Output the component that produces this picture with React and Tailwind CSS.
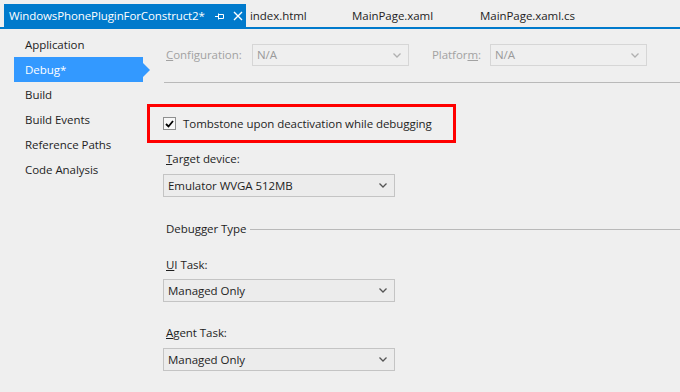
import React from 'react'

const NAV = ['Application', 'Debug*', 'Build', 'Build Events', 'Reference Paths', 'Code Analysis']

export default function App() {
  return (
    <div
      className="flex h-[392px] w-[680px] flex-col overflow-hidden bg-[#efefef] text-[11.5px] tracking-[-0.05px] text-[#1e1e1e]"
      style={{ fontFamily: '"Open Sans", "Noto Sans", sans-serif' }}
    >
      {/* Document tabs */}
      <div className="flex h-[29px] shrink-0 items-end border-b-2 border-[#007acc]">
        <div className="ml-[4px] flex h-[23px] w-[242px] items-center bg-[#007acc] pl-[5px] text-white">
          <span className="w-[206px] whitespace-nowrap tracking-[-0.1px]">
            WindowsPhonePluginForConstruct2*
          </span>
          <PinIcon />
          <CloseIcon />
        </div>
        <div className="flex h-[23px] w-[106px] items-center pl-[4px]">index.html</div>
        <div className="flex h-[23px] w-[128px] items-center">MainPage.xaml</div>
        <div className="flex h-[23px] items-center">MainPage.xaml.cs</div>
      </div>

      <div className="flex flex-1">
        {/* Left nav */}
        <div className="flex w-[150px] shrink-0 flex-col pt-[3px]">
          {NAV.map((item) =>
            item === 'Debug*' ? (
              <div key={item} className="flex h-[25px] items-center">
                <div className="ml-[14px] flex h-[25px] w-[129px] items-center bg-[#3399ff] pl-[11px] text-white">
                  {item}
                </div>
                <svg width="7" height="14" viewBox="0 0 7 14">
                  <path d="M0 0L7 7L0 14Z" fill="#3399ff" />
                </svg>
              </div>
            ) : (
              <div key={item} className="flex h-[25px] items-center pl-[25px]">
                {item}
              </div>
            )
          )}
        </div>

        {/* Debug page */}
        <div className="flex flex-1 flex-col pt-[15px]">
          <div className="flex h-[22px] items-center">
            <span className="ml-[16px] w-[86px] text-[#a2a2a2]">
              <u>C</u>onfiguration:
            </span>
            <Combo value="N/A" disabled className="h-[22px] w-[157px]" />
            <span className="ml-[23px] w-[58px] text-[#a2a2a2]">
              Platfor<u>m</u>:
            </span>
            <Combo value="N/A" disabled className="h-[22px] w-[157px]" />
          </div>

          <div className="ml-[14px] mt-[16px] h-px bg-[#b9b9b9]" />

          <div className="ml-[-3px] mt-[21px] flex h-[39px] w-[309px] items-center border-[3px] border-[#ff0000] pl-[13px]">
            <Checkbox />
            <span className="ml-[7px] whitespace-nowrap">Tombstone upon deactivation while debugging</span>
          </div>

          <Label className="mt-[8px]">
            <u>T</u>arget device:
          </Label>
          <Combo value="Emulator WVGA 512MB" className="ml-[13px] mt-[7px] h-[23px] w-[232px]" />

          <div className="mt-[24px] flex h-[16px] items-center">
            <span className="ml-[16px] whitespace-nowrap">Debugger Type</span>
            <div className="ml-[4px] h-px flex-1 bg-[#b9b9b9]" />
          </div>

          <Label className="mt-[20px]">
            <u>U</u>I Task:
          </Label>
          <Combo value="Managed Only" className="ml-[13px] mt-[6px] h-[23px] w-[232px]" />

          <Label className="mt-[23px]">
            <u>A</u>gent Task:
          </Label>
          <Combo value="Managed Only" className="ml-[13px] mt-[7px] h-[23px] w-[232px]" />
        </div>
      </div>
    </div>
  )
}

function Label({ children, className = '' }) {
  return <div className={`flex h-[16px] items-center pl-[16px] ${className}`}>{children}</div>
}

function Combo({ value, disabled, className = '' }) {
  return (
    <div
      className={`flex shrink-0 items-center justify-between border pl-[4px] pr-[7px] ${
        disabled
          ? 'border-[#d6d6d6] bg-[#efefef] text-[#9a9a9a]'
          : 'border-[#c4c4c4] bg-[#ececec] text-[#1e1e1e]'
      } ${className}`}
    >
      <span className="whitespace-nowrap">{value}</span>
      <svg width="8" height="5" viewBox="0 0 8 5">
        <path
          d="M0.5 0.5L4 4L7.5 0.5"
          fill="none"
          stroke={disabled ? '#b0b0b0' : '#555555'}
          strokeWidth="1.3"
        />
      </svg>
    </div>
  )
}

function Checkbox() {
  return (
    <div className="flex h-[13px] w-[13px] shrink-0 items-center justify-center border border-[#8e8f8f] bg-[#f7f7f7]">
      <svg width="9" height="8" viewBox="0 0 9 8">
        <path d="M1 4L3.5 6.5L8 1" fill="none" stroke="#000" strokeWidth="1.8" />
      </svg>
    </div>
  )
}

function PinIcon() {
  return (
    <svg width="10" height="10" viewBox="0 0 10 10" className="shrink-0">
      <path d="M0 5.5H3M3.5 2.5V8.5M3.5 3.5H8.5V7.5H3.5" fill="none" stroke="#fff" strokeWidth="1" />
    </svg>
  )
}

function CloseIcon() {
  return (
    <svg width="10" height="10" viewBox="0 0 10 10" className="ml-[8px] shrink-0">
      <path d="M1 1L9 9M9 1L1 9" fill="none" stroke="#fff" strokeWidth="1.4" />
    </svg>
  )
}
